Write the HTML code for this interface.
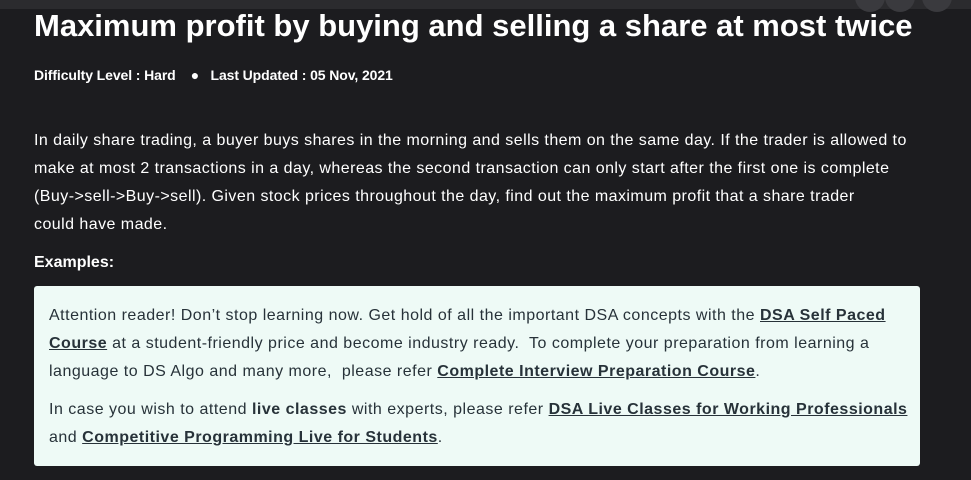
<!DOCTYPE html>
<html><head><style>
body{margin:0;width:971px;height:480px;background:#1c1c1f;overflow:hidden;font-family:"Liberation Sans",sans-serif;position:relative}
.top{position:absolute;left:0;top:0;width:971px;height:9px;background:#2b2b2e}
.c{position:absolute;top:-18px;width:30px;height:30px;border-radius:50%;background:#3a3a3e}
h1{position:absolute;left:34px;top:8px;margin:0;color:#fff;font-size:31px;font-weight:bold;letter-spacing:0px;white-space:nowrap}
.meta{position:absolute;left:34px;top:67px;color:#fff;font-size:14px;letter-spacing:-0.1px;white-space:nowrap;font-weight:bold}
.p{position:absolute;left:34px;top:127px;width:930px;color:#fff;font-size:16px;line-height:28px;letter-spacing:0.45px;white-space:nowrap}
.ex{position:absolute;left:34px;top:254px;color:#fff;font-size:16px;font-weight:bold}
.box{position:absolute;left:34px;top:286px;width:871px;height:164px;padding:16px 0 0 15px;background:#eefaf6;border-radius:3px;color:#273239;font-size:16px;line-height:28px;letter-spacing:0.5px;white-space:nowrap}
.box p{margin:0 0 10px}
a{color:#273239;font-weight:bold;text-decoration:underline}
</style></head><body>
<div class="top"></div>
<div class="c" style="left:855px"></div><div class="c" style="left:885px"></div><div class="c" style="left:922px"></div>
<h1>Maximum profit by buying and selling a share at most twice</h1>
<div class="meta">Difficulty Level : Hard &nbsp;&nbsp;&nbsp;●&nbsp;&nbsp; Last Updated : 05 Nov, 2021</div>
<div class="p">In daily share trading, a buyer buys shares in the morning and sells them on the same day. If the trader is allowed to<br>make at most 2 transactions in a day, whereas the second transaction can only start after the first one is complete<br>(Buy-&gt;sell-&gt;Buy-&gt;sell). Given stock prices throughout the day, find out the maximum profit that a share trader<br>could have made.</div>
<div class="ex">Examples:</div>
<div class="box">
<p>Attention reader! Don’t stop learning now. Get hold of all the important DSA concepts with the <a>DSA Self Paced<br>Course</a> at a student-friendly price and become industry ready.&nbsp; To complete your preparation from learning a<br>language to DS Algo and many more,&nbsp; please refer <a>Complete Interview Preparation Course</a>.</p>
<p>In case you wish to attend <b>live classes</b> with experts, please refer <a>DSA Live Classes for Working Professionals</a><br>and <a>Competitive Programming Live for Students</a>.</p>
</div>
</body></html>
